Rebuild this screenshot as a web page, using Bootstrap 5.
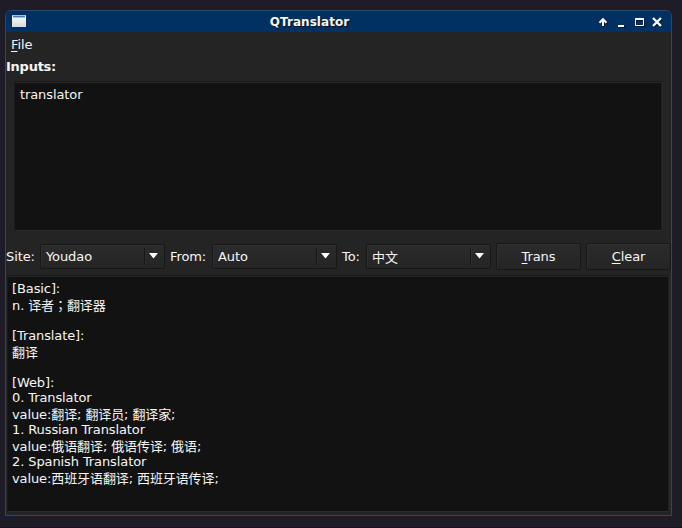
<!DOCTYPE html>
<html lang="en">
<head>
<meta charset="utf-8">
<title>QTranslator</title>
<link rel="stylesheet" href="https://cdn.jsdelivr.net/npm/bootstrap@5.3.0/dist/css/bootstrap.min.css">
<style>
html,body{height:100%}
body{background:#1e1d27;color:#f6f6f6;font:13px/15px "DejaVu Sans","Noto Sans CJK SC",sans-serif;letter-spacing:-.1px;padding:10px 10px 12px 5px;border-bottom:1px solid #1c101f;overflow:hidden}
.win{width:667px;height:506px;border:1px solid #224a73;border-radius:6px 6px 0 0;background:#242424}
.titlebar{height:21px;background:#003162;font-weight:700;font-size:12px;letter-spacing:.05px;border-radius:5px 5px 0 0;text-shadow:1px 1px 1px #001225;padding:0 7px 0 6px}
.titlebar .caption{padding:2px 6px 0 0}
.menubar{height:26px;padding:5px 5px 0}
.heading{height:23px;font-weight:700;padding-top:1px;letter-spacing:-.25px}
.edit{background:#121212;border:1px solid #1b1b1b;border-right-color:#2c2c2c;border-bottom-color:#2c2c2c;box-shadow:inset 0 1px #272727,inset -1px 0 #1d1d1d;border-radius:2px;white-space:pre}
.source{margin:0 8px 0 8px;height:150px;padding:5px 5px}
.controls{height:44px;padding-top:12px}
.field,.action{background:linear-gradient(#2b2b2b,#252525);border:1px solid #171717;border-radius:2px;box-shadow:inset 1px 1px #303030}
.field{width:125px;height:25px;padding-left:5px;margin-top:1px}
.field .arrow{width:20px;height:17px;border-left:1px solid #151515;box-shadow:inset 1px 0 #303030;padding:5px 0 0 4px}
.action{width:85px;height:27px;color:#f6f6f6;line-height:15px;padding:0;font-size:13px;letter-spacing:-.1px}
.key{text-decoration:underline;text-decoration-thickness:1px;text-underline-offset:2px;text-decoration-skip-ink:none}
.result{margin:0 1px;height:237px;padding:5px 4px}
.latin{height:15px}
.han{height:17px;padding-top:2px}
.mid{font-family:"Noto Sans CJK TC",sans-serif;line-height:0}
svg{display:block}
</style>
<script src="https://cdn.jsdelivr.net/npm/bootstrap@5.3.0/dist/js/bootstrap.bundle.min.js"></script>
</head>
<body>
<main class="win d-flex flex-column">
  <header class="titlebar d-flex align-items-center">
    <svg width="15" height="13" viewBox="0 0 15 13"><defs><linearGradient id="g" x2="0" y2="1"><stop stop-color="#fff"/><stop offset="1" stop-color="#d9dbd5"/></linearGradient></defs><path fill="url(#g)" d="M0 0h14v12H0z"/><path fill="#4d78b8" d="M1 1h12v1H1z"/><path fill="#a9bfdf" d="M0 0h14v1H0zM1 2h12v1H1z"/></svg>
    <div class="caption flex-grow-1 text-center">QTranslator</div>
    <svg width="66" height="13" viewBox="0 0 66 13" style="filter:drop-shadow(1px 1px 0 #001a35)"><g fill="none" stroke="#fff" stroke-width="2"><path d="M5 11V4M1.500 7.700 5 4.200 8.500 7.700"/><path d="M20 11h6"/><path stroke-width="1" d="M37.500 3.500h8v7h-8z"/><path d="M37 4h9"/><path stroke-width="2.300" d="m55 3 8 8m0-8-8 8"/></g></svg>
  </header>
  <nav class="menubar"><span class="key">F</span>ile</nav>
  <div class="heading">Inputs:</div>
  <div class="edit source">translator</div>
  <div class="controls d-flex align-items-start">
    <div class="d-flex align-items-center" style="width:34px;height:27px">Site:</div>
    <div class="field d-flex align-items-center"><span class="flex-grow-1">Youdao</span><span class="arrow"><svg width="9" height="6"><path fill="#fff" d="M0 0h9L4.500 5.500z"/></svg></span></div>
    <div class="d-flex align-items-center" style="width:47px;height:27px;padding-left:5px">From:</div>
    <div class="field d-flex align-items-center"><span class="flex-grow-1">Auto</span><span class="arrow"><svg width="9" height="6"><path fill="#fff" d="M0 0h9L4.500 5.500z"/></svg></span></div>
    <div class="d-flex align-items-center" style="width:29px;height:27px;padding-left:5px">To:</div>
    <div class="field d-flex align-items-center"><span class="flex-grow-1" style="padding-top:2px">中文</span><span class="arrow"><svg width="9" height="6"><path fill="#fff" d="M0 0h9L4.500 5.500z"/></svg></span></div>
    <button class="action" style="margin-left:5px"><span class="key">T</span>rans</button>
    <button class="action" style="margin-left:5px"><span class="key">C</span>lear</button>
  </div>
  <div class="edit result"><div class="latin">[Basic]:</div><div class="han">n. 译者<span class="mid">；</span>翻译器</div><div class="latin"></div><div class="latin">[Translate]:</div><div class="han">翻译</div><div class="latin"></div><div class="latin">[Web]:</div><div class="latin">0. Translator</div><div class="han">value:翻译; 翻译员; 翻译家;</div><div class="latin">1. Russian Translator</div><div class="han">value:俄语翻译; 俄语传译; 俄语;</div><div class="latin">2. Spanish Translator</div><div class="han">value:西班牙语翻译; 西班牙语传译;</div></div>
</main>
</body>
</html>
